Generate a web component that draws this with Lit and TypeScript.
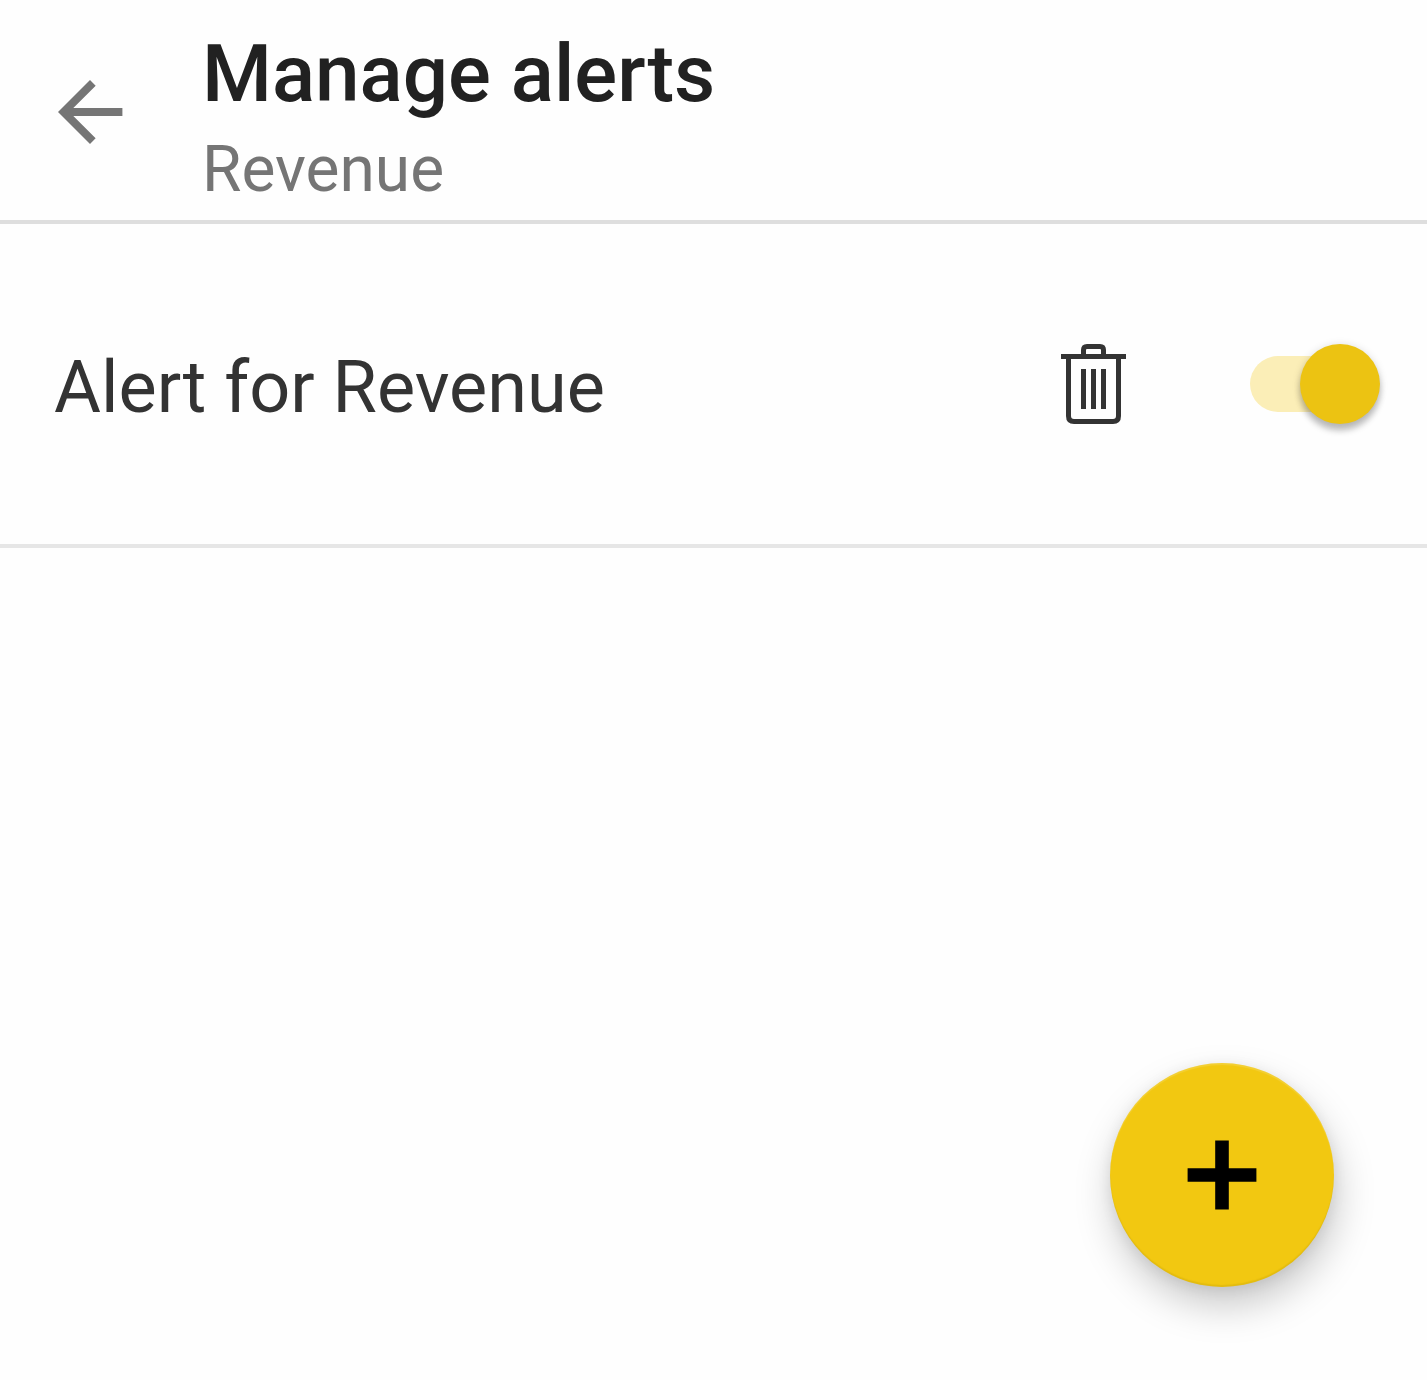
import { LitElement, html, css } from "lit";
import { customElement, state } from "lit/decorators.js";

@customElement("app-root")
export class AppRoot extends LitElement {
  @state() private enabled = true;

  static styles = css`
    :host { display: flex; flex-direction: column; height: 1380px; box-sizing: border-box; background: #fefefe; font-family: Roboto, sans-serif; position: relative; overflow: hidden; }
    header { display: flex; height: 220px; border-bottom: 4px solid #dedede; box-sizing: content-box; }
    button { border: 0; padding: 0; background: none; display: block; }
    svg { display: block; }
    .back { width: 96px; height: 96px; margin: 64px 64px 0 42px; }
    .titles { padding-top: 27px; }
    h1 { margin: 0; font-size: 80px; font-weight: 500; line-height: 94px; color: #212121; white-space: nowrap; }
    .sub { font-size: 64px; line-height: 76px; margin-top: 11px; color: #757575; white-space: nowrap; }
    .row { display: flex; align-items: center; height: 320px; border-bottom: 4px solid #e6e6e6; padding: 0 47px 0 54px; }
    .name { flex: 1; font-size: 72px; line-height: 84px; color: #333; white-space: nowrap; padding-top: 8px; }
    .trash { width: 65px; height: 80px; margin-right: 124px; }
    .switch { width: 130px; height: 80px; display: grid; align-items: center; }
    .track, .thumb { grid-area: 1 / 1; }
    .track { width: 100px; height: 56px; border-radius: 28px; background: #fbeeb7; }
    .thumb { justify-self: end; width: 80px; height: 80px; border-radius: 50%; background: #ecc312; box-shadow: 0 7px 6px rgba(0,0,0,.22), 0 1px 9px rgba(0,0,0,.14); }
    .fab { position: absolute; left: 1110px; top: 1063px; width: 224px; height: 224px; border-radius: 50%; background: #f2c811; box-shadow: inset 0 -2px 1px rgba(150,120,0,.15), inset 0 2px 1px rgba(255,255,255,.15), 3px 19px 38px rgba(0,0,0,.21), 0 3px 14px rgba(0,0,0,.08); display: flex; align-items: center; justify-content: center; }
  `;

  render() {
    return html`
      <header>
        <button class="back" aria-label="Back"><svg width="96" height="96" viewBox="0 0 24 24" fill="#757575"><path d="M20.100 11H7.830l5.590-5.590L12 4l-8 8 8 8 1.410-1.410L7.830 13H20.100z"/></svg></button>
        <div class="titles"><h1>Manage alerts</h1><div class="sub">Revenue</div></div>
      </header>
      <div class="row">
        <div class="name">Alert for Revenue</div>
        <button class="trash" aria-label="Delete"><svg width="65" height="80" viewBox="0 0 65 80" fill="none" stroke="#333" stroke-width="5"><path d="M0 12.500H65M7.500 12V72Q7.500 77.500 13 77.500H52Q57.500 77.500 57.500 72V12M22.500 12V6Q22.500 2.500 26 2.500H39Q42.500 2.500 42.500 6V12M22.500 25V65M32.500 25V65M42.500 25V65"/></svg></button>
        <button class="switch" role="switch" aria-label="Alert enabled" aria-checked=${this.enabled}><span class="track"></span><span class="thumb"></span></button>
      </div>
      <button class="fab" aria-label="Add alert"><svg width="70" height="70" viewBox="0 0 70 70"><path d="M28.200 .6H41.800V28.200H69.400V41.800H41.800V69.400H28.200V41.800H.6V28.200H28.200Z"/></svg></button>
    `;
  }
}
